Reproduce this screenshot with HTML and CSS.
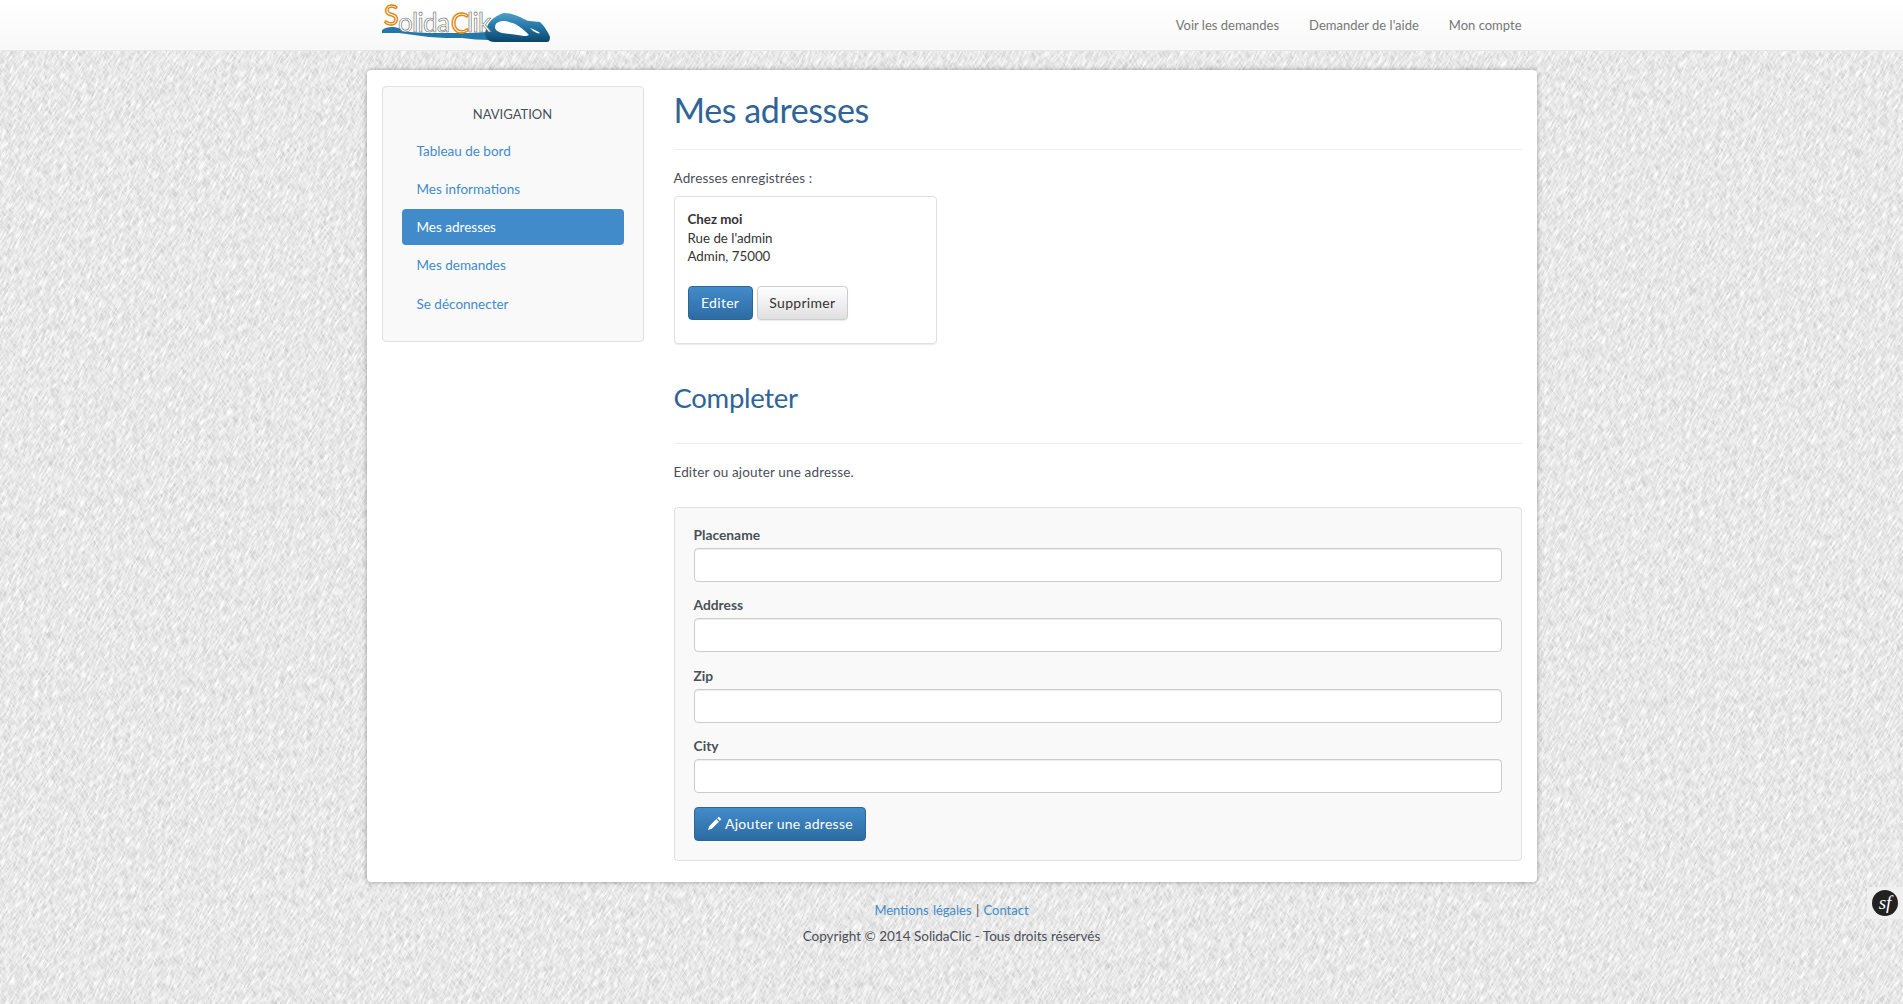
FILE: index.html
```html
<!DOCTYPE html>
<html lang="fr">
<head>
    <meta charset="UTF-8">
    <title>SolidaClik - Mes adresses</title>
    <link rel="stylesheet" href="styles.css">
</head>
<body>
    <nav class="navbar">
        <div class="navbar-inner">
            <a class="logo" href="#">
                <svg width="170" height="44" viewBox="0 0 170 44">
                    <defs>
                        <linearGradient id="mouse" x1="0" y1="0" x2="0" y2="1">
                            <stop offset="0" stop-color="#4d9fcb"/>
                            <stop offset="0.55" stop-color="#1f6f9f"/>
                            <stop offset="1" stop-color="#0b4568"/>
                        </linearGradient>
                    </defs>
                    <path fill="#2478a8" d="M0 28c4-3 8-3 12-3 6 1 11 4 16 5 12 1 24 1 34 1 9 0 18 0 26 0 6 0 12-1 17-1l2 8c-9 0-18-1-27-2-11 0-22 0-33-1-10-1-20-3-30-4-6 0-12 0-17 0z"/>
                    <path fill="url(#mouse)" d="M103 31c2-7 4-12 9-15 4-3 8-5 11-5 5 0 10 2 15 4 4 2 7 4 10 4l10 1c2 2 4 4 5 6 2 3 4 6 5 9 0 3-1 5-3 5H112c-3 0-5-1-7-3-1-2-2-4-2-6z"/>
                    <path fill="#fff" d="M113 26c0-3 1-5 2-5 3-2 5-2 8-2 4 1 9 2 12 4 5 3 9 7 12 10-2 1-3 1-5 1-7-1-15-2-22-3-3-1-6-2-7-5z"/>
                    <path fill="#fff" d="M148 26c4 1 7 3 10 5-1 1-2 0-3 0-3-1-5-3-7-5z"/>
                    <text class="logo-text"><tspan class="logo-cap" x="2" y="23">S</tspan><tspan class="logo-low" x="16" y="30">olida</tspan><tspan class="logo-cap" x="69" y="31">C</tspan><tspan class="logo-low" x="85" y="30">lik</tspan></text>
                </svg>
            </a>
            <ul class="nav-links">
                <li><a href="#">Voir les demandes</a></li>
                <li><a href="#">Demander de l'aide</a></li>
                <li><a href="#">Mon compte</a></li>
            </ul>
        </div>
    </nav>

    <div class="page">
        <aside class="sidebar">
            <h4 class="sidebar-title">NAVIGATION</h4>
            <ul class="side-nav">
                <li><a href="#">Tableau de bord</a></li>
                <li><a href="#">Mes informations</a></li>
                <li class="active"><a href="#">Mes adresses</a></li>
                <li><a href="#">Mes demandes</a></li>
                <li class="last"><a href="#">Se déconnecter</a></li>
            </ul>
        </aside>

        <main class="content">
            <h1 class="page-title">Mes adresses</h1>
            <p class="saved-label">Adresses enregistrées :</p>
            <div class="address-card">
                <address>
                    <strong>Chez moi</strong><br>
                    Rue de l'admin<br>
                    Admin, 75000
                </address>
                <div class="actions">
                    <a class="btn btn-primary btn-edit" href="#">Editer</a>
                    <a class="btn btn-default" href="#">Supprimer</a>
                </div>
            </div>

            <h2 class="section-title">Completer</h2>
            <p class="form-intro">Editer ou ajouter une adresse.</p>

            <form class="well">
                <div class="form-group">
                    <label for="placename">Placename</label>
                    <input type="text" id="placename">
                </div>
                <div class="form-group">
                    <label for="address">Address</label>
                    <input type="text" id="address">
                </div>
                <div class="form-group">
                    <label for="zip">Zip</label>
                    <input type="text" id="zip">
                </div>
                <div class="form-group">
                    <label for="city">City</label>
                    <input type="text" id="city">
                </div>
                <button class="btn btn-primary btn-add" type="button">
                    <svg width="15" height="15" viewBox="0 0 14 14"><path fill="#fff" d="M11 .6l2.400 2.400-1.500 1.500-2.400-2.400zM8.700 2.900l2.400 2.400-6.600 6.600-3.600 1.200 1.200-3.600z"/></svg>
                    Ajouter une adresse
                </button>
            </form>
        </main>
    </div>

    <footer class="footer">
        <p class="footer-links"><a href="#">Mentions légales</a> | <a href="#">Contact</a></p>
        <p>Copyright © 2014 SolidaClic - Tous droits réservés</p>
    </footer>

    <div class="sf-toolbar">
        <svg width="26" height="26" viewBox="0 0 26 26">
            <circle cx="13" cy="13" r="13" fill="#222"/>
            <text class="sf-mark" x="13" y="18.500" text-anchor="middle">sf</text>
        </svg>
    </div>
</body>
</html>
```

FILE: styles.css
```css
:root {
    --blue: #428bca;
    --title: #2f6499;
    --text: #4a5058;
    --border: #e0e0e0;
    --font-main: 'Lato', 'Open Sans', sans-serif;
}
* {
    box-sizing: border-box;
}
html, body {
    margin: 0;
    padding: 0;
}
body {
    min-height: 1004px;
    font-family: var(--font-main);
    font-size: 13.500px;
    line-height: 18px;
    color: var(--text);
    background-color: #e8e8e8;
    background-image: url("data:image/svg+xml,%3Csvg xmlns='http://www.w3.org/2000/svg' width='1903' height='1004'%3E%3Cfilter id='a' x='0' y='0' width='100%25' height='100%25' color-interpolation-filters='sRGB'%3E%3CfeTurbulence type='fractalNoise' baseFrequency='0.1 0.6' numOctaves='2' seed='7'/%3E%3CfeColorMatrix values='0 0 0 0 1 0 0 0 0 1 0 0 0 0 1 2.6 0 0 0 -1.05'/%3E%3C/filter%3E%3Cfilter id='b' x='0' y='0' width='100%25' height='100%25' color-interpolation-filters='sRGB'%3E%3CfeTurbulence type='fractalNoise' baseFrequency='0.1 0.6' numOctaves='2' seed='21'/%3E%3CfeColorMatrix values='0 0 0 0 0.8 0 0 0 0 0.8 0 0 0 0 0.8 2.6 0 0 0 -1.05'/%3E%3C/filter%3E%3Crect width='1903' height='1004' fill='%23e6e6e6'/%3E%3Cg transform='rotate(55 950 500)'%3E%3Crect x='-600' y='-900' width='3100' height='2800' filter='url(%23b)'/%3E%3C/g%3E%3Cg transform='rotate(-60 950 500)'%3E%3Crect x='-600' y='-900' width='3100' height='2800' filter='url(%23a)'/%3E%3C/g%3E%3C/svg%3E");
}
a {
    color: var(--blue);
    text-decoration: none;
}
ul {
    list-style: none;
    margin: 0;
    padding: 0;
}

/* navbar */
.navbar {
    height: 51px;
    background: linear-gradient(to bottom, #ffffff, #f8f8f8);
    border-bottom: 1px solid #e7e7e7;
}
.navbar-inner {
    width: 1170px;
    height: 50px;
    margin: 0 auto;
    padding: 0 15px;
    display: flex;
    justify-content: space-between;
    align-items: flex-start;
}
.logo {
    display: block;
    margin-top: 2px;
}
.logo svg {
    overflow: visible;
}
.logo-text {
    font-family: 'Lato', sans-serif;
    fill: #fff;
    stroke: #666;
    stroke-width: 0.6px;
}
.logo-low {
    font-size: 26px;
    letter-spacing: -0.7px;
}
.logo-cap {
    font-size: 27px;
    stroke: #e08a10;
    stroke-width: 1.4px;
}
.nav-links {
    display: flex;
    gap: 30px;
    font-size: 13px;
}
.nav-links a {
    display: block;
    line-height: 50px;
    color: #777;
}

/* main card */
.page {
    width: 1170px;
    margin: 19px auto 0;
    padding: 16px 15px 21px;
    display: flex;
    gap: 30px;
    align-items: flex-start;
    background: #fff;
    border-radius: 4px;
    box-shadow: 0 0 5px rgba(0, 0, 0, 0.35);
}
.sidebar {
    width: 262px;
    flex: none;
    height: 256px;
    padding: 18px 19px 0;
    background: #f9f9f9;
    border: 1px solid var(--border);
    border-radius: 4px;
}
.sidebar-title {
    margin: 0 0 10px;
    font-size: 13px;
    font-weight: normal;
    line-height: 18px;
    text-align: center;
}
.side-nav {
    display: flex;
    flex-direction: column;
    gap: 2px;
}
.side-nav a {
    display: block;
    height: 36px;
    padding: 0 15px;
    line-height: 36px;
    border-radius: 4px;
}
.side-nav .active a {
    background: var(--blue);
    color: #fff;
}
.side-nav .last {
    margin-top: 1px;
}

.content {
    flex: 1;
    min-width: 0;
}
.page-title {
    margin: 0;
    padding: 5px 0 20px;
    height: 64px;
    font-size: 34px;
    letter-spacing: -0.4px;
    line-height: 38px;
    font-weight: normal;
    color: var(--title);
    border-bottom: 1px solid #eeeeee;
}
.saved-label {
    margin: 19px 0 9px;
    letter-spacing: 0.15px;
}
.address-card {
    width: 263px;
    height: 148px;
    padding: 13px 13px 0;
    border: 1px solid var(--border);
    border-radius: 4px;
    box-shadow: 0 1px 1px rgba(0, 0, 0, 0.08);
}
address {
    font-style: normal;
    font-size: 13.300px;
    color: #333;
    line-height: 18.500px;
}
.actions {
    display: flex;
    gap: 4px;
    margin-top: 20px;
}
.btn {
    display: inline-block;
    height: 34px;
    padding: 0 12px;
    font-family: var(--font-main);
    font-size: 14px;
    line-height: 32px;
    letter-spacing: 0.3px;
    border-radius: 4px;
    border: 1px solid transparent;
    cursor: pointer;
}
.btn-primary {
    color: #fff;
    background: linear-gradient(to bottom, #428bca, #2d6ca2);
    border-color: #2b669a;
}
.btn-edit {
    padding: 0 12.500px;
}
.btn-default {
    padding: 0 11.500px;
    color: #333;
    background: linear-gradient(to bottom, #ffffff, #e0e0e0);
    border-color: #ccc;
    box-shadow: 0 1px 1px rgba(0, 0, 0, 0.08);
}
.section-title {
    margin: 0;
    padding-top: 35px;
    height: 100px;
    font-size: 27.500px;
    letter-spacing: -0.3px;
    line-height: 38px;
    font-weight: normal;
    color: var(--title);
    border-bottom: 1px solid #eeeeee;
}
.form-intro {
    margin: 19px 0 26px;
    letter-spacing: 0.15px;
}
.well {
    height: 354px;
    padding: 18px 19px 0;
    background: #f9f9f9;
    border: 1px solid var(--border);
    border-radius: 4px;
}
.form-group {
    margin-bottom: 14.300px;
}
.form-group label {
    display: block;
    margin-bottom: 4px;
    font-size: 13.800px;
    font-weight: 700;
    height: 18px;
}
.form-group input {
    display: block;
    width: 100%;
    height: 34px;
    padding: 6px 12px;
    background: #fff;
    border: 1px solid #ccc;
    border-radius: 4px;
    box-shadow: inset 0 1px 1px rgba(0, 0, 0, 0.075);
}
.btn-add svg {
    vertical-align: -2px;
}

/* footer */
.footer {
    width: 1170px;
    margin: 0 auto;
    padding-top: 19px;
    text-align: center;
}
.footer p {
    margin: 0;
}
.footer-links {
    padding-bottom: 8px;
    font-size: 13px;
    word-spacing: 1px;
}

.sf-toolbar {
    position: fixed;
    right: 0;
    top: 887px;
    width: 36px;
    height: 32px;
    padding: 3px 0 0 5px;
    background: #f0f0f0;
}
.sf-mark {
    font-family: 'Liberation Serif', serif;
    font-style: italic;
    font-size: 19px;
    fill: #fff;
}
```
